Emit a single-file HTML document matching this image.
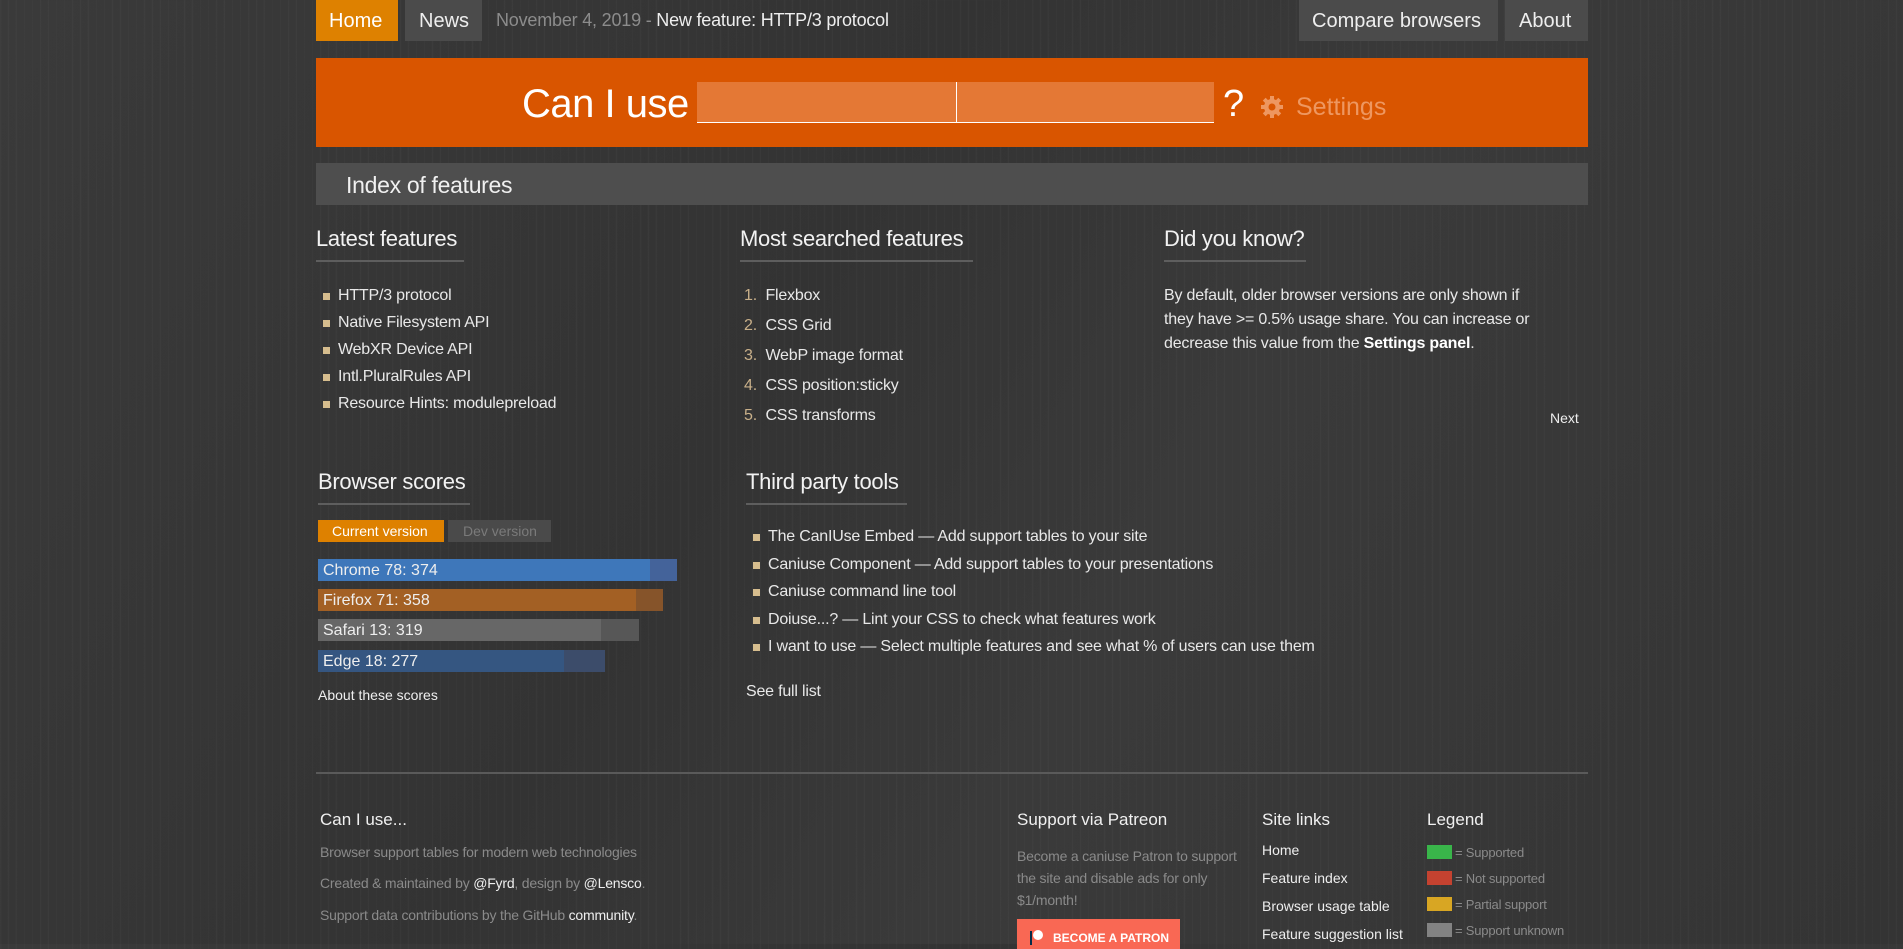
<!DOCTYPE html>
<html><head><meta charset="utf-8"><style>
html,body{margin:0;padding:0}
body{width:1903px;height:944px;overflow:hidden;position:relative;background:#373737;
background-image:repeating-linear-gradient(90deg,rgba(255,255,255,0.025) 0 1px,transparent 1px 8px),linear-gradient(120deg,#3a3a3a 0%,#333 40%,#3a3a3a 60%,#343434 100%);
font-family:"Liberation Sans",sans-serif;color:#eee}
.a{position:absolute;white-space:nowrap;line-height:1}
.box{position:absolute}
.hd{font-size:22px;color:#f2f2f2;letter-spacing:-0.3px}
.ul{position:absolute;height:2px;background:#5e5e5e}
.li{font-size:16px;color:#e8e8e8;letter-spacing:-0.2px}
.bul{position:absolute;width:7px;height:7px;background:#d6bd8e}
.num{color:#c9b08a}
.ft{font-size:14px;color:#8a8a8a;letter-spacing:-0.2px}
.fl{color:#eee}
.bar{position:absolute;height:22px}
.bar span{position:absolute;left:0;top:0;height:22px}
.bar b{position:absolute;left:5px;top:3px;font-weight:normal;font-size:16px;color:#eee;white-space:nowrap}
.sw{position:absolute;width:25px;height:14px}
</style></head><body>
<div class="box" style="left:316px;top:0;width:82px;height:41px;background:#de8100"></div>
<div class="a" style="left:329px;top:11px;font-size:20px;color:#fff">Home</div>
<div class="box" style="left:405px;top:0;width:77px;height:41px;background:#4b4b4b"></div>
<div class="a" style="left:419px;top:11px;font-size:20px;color:#eee">News</div>
<div class="a" style="left:496px;top:11px;font-size:18px;color:#8c8c8c;letter-spacing:-0.2px">November 4, 2019 - <span style="color:#eee">New feature: HTTP/3 protocol</span></div>
<div class="box" style="left:1299px;top:0;width:199px;height:41px;background:#4b4b4b"></div>
<div class="a" style="left:1312px;top:11px;font-size:20px;color:#eee">Compare browsers</div>
<div class="box" style="left:1505px;top:0;width:83px;height:41px;background:#4b4b4b"></div>
<div class="a" style="left:1519px;top:11px;font-size:20px;color:#eee">About</div>
<div class="box" style="left:316px;top:58px;width:1272px;height:89px;background:#d95500"></div>
<div class="a" style="left:522px;top:84px;font-size:40px;color:#fff;letter-spacing:-0.5px">Can I use</div>
<div class="box" style="left:697px;top:82px;width:517px;height:40px;background:#e47835;border-bottom:1px solid #fff"></div>
<div class="box" style="left:956px;top:82px;width:1px;height:40px;background:#fff"></div>
<div class="a" style="left:1223px;top:85px;font-size:38px;color:#fff">?</div>
<svg class="box" style="left:1260px;top:95px" width="24" height="24" viewBox="0 0 24 24"><g fill="#ee9760"><circle cx="12" cy="12" r="8"/><rect x="10" y="1" width="4" height="22"/><rect x="1" y="10" width="22" height="4"/><rect x="10" y="1" width="4" height="22" transform="rotate(45 12 12)"/><rect x="10" y="1" width="4" height="22" transform="rotate(-45 12 12)"/></g><circle cx="12" cy="12" r="3.5" fill="#d95500"/></svg>
<div class="a" style="left:1296px;top:95px;font-size:25px;color:#ee9760">Settings</div>
<div class="box" style="left:316px;top:163px;width:1272px;height:42px;background:#4e4e4e"></div>
<div class="a" style="left:346px;top:174px;font-size:23px;color:#f0f0f0;letter-spacing:-0.3px">Index of features</div>
<div class="a hd" style="left:316px;top:228px">Latest features</div>
<div class="ul" style="left:316px;top:260px;width:148px"></div>
<div class="bul" style="left:323px;top:293px"></div><div class="a li" style="left:338px;top:288px">HTTP/3 protocol</div>
<div class="bul" style="left:323px;top:320px"></div><div class="a li" style="left:338px;top:315px">Native Filesystem API</div>
<div class="bul" style="left:323px;top:347px"></div><div class="a li" style="left:338px;top:342px">WebXR Device API</div>
<div class="bul" style="left:323px;top:374px"></div><div class="a li" style="left:338px;top:369px">Intl.PluralRules API</div>
<div class="bul" style="left:323px;top:401px"></div><div class="a li" style="left:338px;top:396px">Resource Hints: modulepreload</div>
<div class="a hd" style="left:740px;top:228px">Most searched features</div>
<div class="ul" style="left:740px;top:260px;width:233px"></div>
<div class="a li" style="left:744px;top:288px"><span class="num">1.</span>&nbsp; Flexbox</div>
<div class="a li" style="left:744px;top:318px"><span class="num">2.</span>&nbsp; CSS Grid</div>
<div class="a li" style="left:744px;top:348px"><span class="num">3.</span>&nbsp; WebP image format</div>
<div class="a li" style="left:744px;top:378px"><span class="num">4.</span>&nbsp; CSS position:sticky</div>
<div class="a li" style="left:744px;top:408px"><span class="num">5.</span>&nbsp; CSS transforms</div>
<div class="a hd" style="left:1164px;top:228px">Did you know?</div>
<div class="ul" style="left:1164px;top:260px;width:142px"></div>
<div class="a li" style="left:1164px;top:284px;line-height:24px;white-space:normal;width:385px">By default, older browser versions are only shown if they have &gt;= 0.5% usage share. You can increase or decrease this value from the <b style="color:#fff">Settings panel</b>.</div>
<div class="a" style="left:1550px;top:411px;font-size:14px;color:#eee">Next</div>
<div class="a hd" style="left:318px;top:471px">Browser scores</div>
<div class="ul" style="left:318px;top:503px;width:152px"></div>
<div class="box" style="left:318px;top:520px;width:126px;height:22px;background:#de8100"></div>
<div class="a" style="left:332px;top:524px;font-size:14px;color:#fff">Current version</div>
<div class="box" style="left:448px;top:520px;width:103px;height:22px;background:#4a4a4a"></div>
<div class="a" style="left:463px;top:524px;font-size:14px;color:#7a7a7a">Dev version</div>
<div class="bar" style="left:318px;top:559px;width:359px;background:#44639a"><span style="width:332px;background:#3e77ba"></span><b>Chrome 78: 374</b></div>
<div class="bar" style="left:318px;top:589px;width:345px;background:#86542a"><span style="width:318px;background:#a36024"></span><b>Firefox 71: 358</b></div>
<div class="bar" style="left:318px;top:619px;width:321px;background:#575757"><span style="width:283px;background:#676767"></span><b>Safari 13: 319</b></div>
<div class="bar" style="left:318px;top:650px;width:287px;background:#3c4c6a"><span style="width:246px;background:#355681"></span><b>Edge 18: 277</b></div>
<div class="a" style="left:318px;top:688px;font-size:14px;color:#eee">About these scores</div>
<div class="a hd" style="left:746px;top:471px">Third party tools</div>
<div class="ul" style="left:746px;top:503px;width:161px"></div>
<div class="bul" style="left:753px;top:534px"></div><div class="a li" style="left:768px;top:529px">The CanIUse Embed — Add support tables to your site</div>
<div class="bul" style="left:753px;top:562px"></div><div class="a li" style="left:768px;top:557px">Caniuse Component — Add support tables to your presentations</div>
<div class="bul" style="left:753px;top:589px"></div><div class="a li" style="left:768px;top:584px">Caniuse command line tool</div>
<div class="bul" style="left:753px;top:617px"></div><div class="a li" style="left:768px;top:612px">Doiuse...? — Lint your CSS to check what features work</div>
<div class="bul" style="left:753px;top:644px"></div><div class="a li" style="left:768px;top:639px">I want to use — Select multiple features and see what % of users can use them</div>
<div class="a li" style="left:746px;top:684px">See full list</div>
<div class="box" style="left:316px;top:772px;width:1272px;height:2px;background:#5a5a5a"></div>
<div class="a" style="left:320px;top:811px;font-size:17px;color:#f0f0f0">Can I use...</div>
<div class="a ft" style="left:320px;top:845px">Browser support tables for modern web technologies</div>
<div class="a ft" style="left:320px;top:876px">Created &amp; maintained by <span class="fl">@Fyrd</span>, design by <span class="fl">@Lensco</span>.</div>
<div class="a ft" style="left:320px;top:908px">Support data contributions by the GitHub <span class="fl">community</span>.</div>
<div class="a" style="left:1017px;top:811px;font-size:17px;color:#f0f0f0">Support via Patreon</div>
<div class="a ft" style="left:1017px;top:845px;line-height:22px;white-space:normal;width:225px">Become a caniuse Patron to support the site and disable ads for only $1/month!</div>
<div class="box" style="left:1017px;top:919px;width:163px;height:30px;background:#f96854"></div>
<div class="box" style="left:1030px;top:931px;width:2px;height:14px;background:#052d49"></div>
<div class="box" style="left:1033px;top:930px;width:10px;height:10px;border-radius:50%;background:#fff"></div>
<div class="a" style="left:1053px;top:932px;font-size:12px;font-weight:bold;color:#fff">BECOME A PATRON</div>
<div class="a" style="left:1262px;top:811px;font-size:17px;color:#f0f0f0">Site links</div>
<div class="a" style="left:1262px;top:843px;font-size:14px;color:#eee">Home</div>
<div class="a" style="left:1262px;top:871px;font-size:14px;color:#eee">Feature index</div>
<div class="a" style="left:1262px;top:899px;font-size:14px;color:#eee">Browser usage table</div>
<div class="a" style="left:1262px;top:927px;font-size:14px;color:#eee">Feature suggestion list</div>
<div class="a" style="left:1427px;top:811px;font-size:17px;color:#f0f0f0">Legend</div>
<div class="sw" style="left:1427px;top:845px;background:#39b54a"></div><div class="a ft" style="left:1455px;top:846px;font-size:13px">= Supported</div>
<div class="sw" style="left:1427px;top:871px;background:#c44230"></div><div class="a ft" style="left:1455px;top:872px;font-size:13px">= Not supported</div>
<div class="sw" style="left:1427px;top:897px;background:#d8a623"></div><div class="a ft" style="left:1455px;top:898px;font-size:13px">= Partial support</div>
<div class="sw" style="left:1427px;top:923px;background:#838383"></div><div class="a ft" style="left:1455px;top:924px;font-size:13px">= Support unknown</div>
</body></html>
